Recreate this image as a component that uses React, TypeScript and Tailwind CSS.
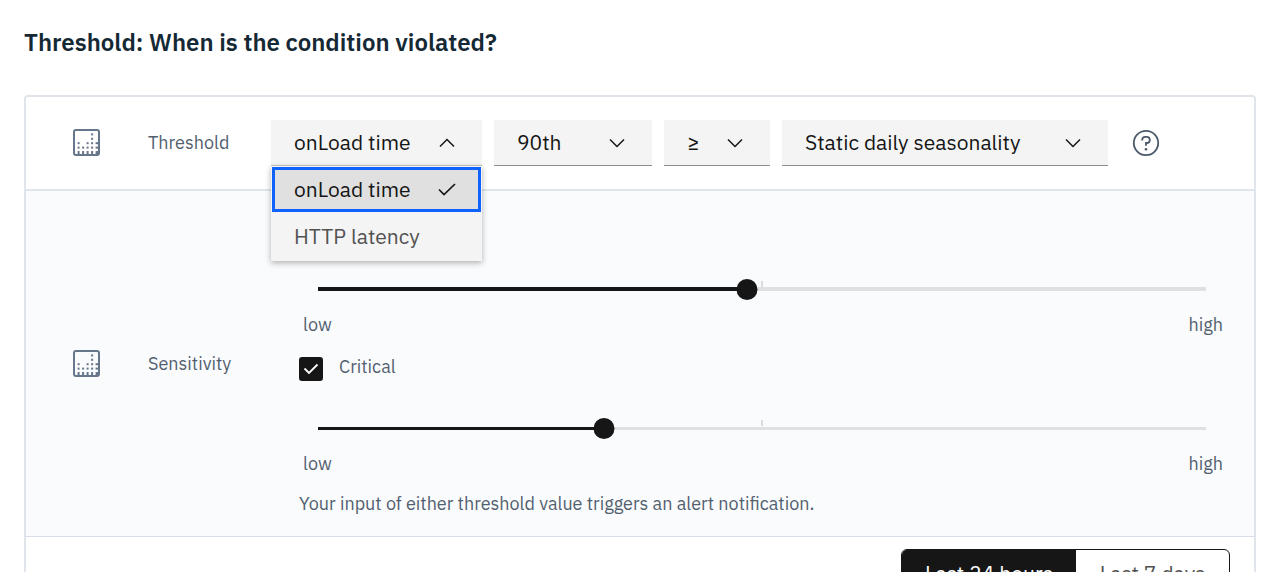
import { useState } from "react";

const dotColumns = [3, 2, 3, 5, 3];

function DistributionIcon() {
  return (
    <svg width="28" height="28" viewBox="0 0 28 28" fill="none" aria-hidden="true" className="shrink-0 text-[#66778b]">
      <rect x="1" y="1" width="25" height="25" rx="2" stroke="currentColor" strokeWidth="2" />
      <g fill="currentColor">
        {dotColumns.map((count, column) =>
          Array.from({ length: count }, (_, row) => (
            <rect
              key={`${column}-${row}`}
              x={4.6 + column * 4.5}
              y={22 - row * 4.4}
              width={column === 4 ? 3 : 2}
              height={row === 0 ? 3 : 2}
            />
          )),
        )}
      </g>
    </svg>
  );
}

function Chevron({ up = false }: { up?: boolean }) {
  return (
    <svg width="16" height="10" viewBox="0 0 16 10" fill="none" aria-hidden="true">
      <path d={up ? "M1 8.5 8 1.5l7 7" : "M1 1.5l7 7 7-7"} stroke="#161616" strokeWidth="1.5" />
    </svg>
  );
}

function Select({ label, options, className }: { label: string; options: string[]; className: string }) {
  return (
    <div className={`grid h-[46px] items-center border-b border-[#8d8d8d] bg-[#f4f4f4] ${className}`}>
      <select
        aria-label={label}
        className="col-start-1 row-start-1 h-full w-full appearance-none bg-transparent pr-12 pl-[23px] text-[21px] text-[#161616]"
      >
        {options.map((option) => (
          <option key={option}>{option}</option>
        ))}
      </select>
      <span className="pointer-events-none col-start-1 row-start-1 justify-self-end pr-[27px]">
        <Chevron />
      </span>
    </div>
  );
}

function MetricDropdown() {
  const [open, setOpen] = useState(true);
  const [value, setValue] = useState("onLoad time");
  return (
    <div className="relative w-[211px] text-[21px]">
      <button
        type="button"
        aria-haspopup="listbox"
        aria-expanded={open}
        onClick={() => setOpen(!open)}
        className="flex h-[46px] w-full items-center justify-between border-b border-[#c6c6c6] bg-[#f4f4f4] pr-[27px] pl-[23px] text-[#161616]"
      >
        {value}
        <Chevron up={open} />
      </button>
      {open && (
        <ul
          role="listbox"
          aria-label="Metric"
          className="absolute top-full left-0 z-10 w-full bg-[#f4f4f4] p-px shadow-[0_2px_6px_rgba(0,0,0,0.3)]"
        >
          {["onLoad time", "HTTP latency"].map((option) => (
            <li
              key={option}
              role="option"
              aria-selected={option === value}
              onClick={() => setValue(option)}
              className={
                option === value
                  ? "flex h-[45px] items-center justify-between border-3 border-[#0f62fe] bg-[#e0e0e0] pr-[22px] pl-[19px] text-[#161616]"
                  : "flex h-12 items-center px-[22px] text-[#525252]"
              }
            >
              {option}
              {option === value && (
                <svg width="18" height="13" viewBox="0 0 18 13" fill="none" aria-hidden="true">
                  <path d="M1 6.5 6 11.5 17 1" stroke="#161616" strokeWidth="1.7" />
                </svg>
              )}
            </li>
          ))}
        </ul>
      )}
    </div>
  );
}

function Slider({ label, initial, thick = false }: { label: string; initial: number; thick?: boolean }) {
  const [value, setValue] = useState(initial);
  const line = thick ? "h-[4px]" : "h-[3px]";
  return (
    <div>
      <div className="relative mr-12 ml-[19px] grid h-6 items-center">
        <div className={`col-start-1 row-start-1 bg-[#e0e0e0] ${line}`} />
        <div className={`col-start-1 row-start-1 bg-[#161616] ${line}`} style={{ width: `${value}%` }} />
        <span className="absolute top-1 left-1/2 h-1.5 w-0.5 -translate-x-1/2 bg-[#dcdcdc]" />
        <span
          className="absolute size-[21px] -translate-x-1/2 rounded-full bg-[#161616]"
          style={{ left: `${value}%` }}
        />
        <input
          type="range"
          aria-label={label}
          step="0.1"
          value={value}
          onChange={(event) => setValue(Number(event.target.value))}
          className="relative col-start-1 row-start-1 w-full cursor-pointer opacity-0"
        />
      </div>
      <div className="mt-3 flex justify-between pr-[31px] pl-1 leading-6">
        <span>low</span>
        <span>high</span>
      </div>
    </div>
  );
}

export default function App() {
  const [critical, setCritical] = useState(true);
  return (
    <main className="h-screen overflow-hidden bg-white px-6 pt-[26px] font-['IBM_Plex_Sans',Roboto,sans-serif] text-lg text-[#525f6f]">
      <h1 className="text-2xl leading-8 font-semibold text-[#152935]">Threshold: When is the condition violated?</h1>
      <section className="mt-[37px] rounded-t border-2 border-[#dfe5ea]">
        <div className="flex h-[94px] items-center border-b-2 border-[#dfe5ea] pl-[47px]">
          <DistributionIcon />
          <h2 className="ml-[47px] w-[123px]">Threshold</h2>
          <div className="flex items-center gap-3">
            <MetricDropdown />
            <Select label="Percentile" options={["90th"]} className="w-[158px]" />
            <Select label="Operator" options={["≥"]} className="w-[106px]" />
            <Select label="Threshold type" options={["Static daily seasonality"]} className="w-[326px]" />
            <button type="button" aria-label="Help" className="ml-3">
              <svg width="28" height="28" viewBox="0 0 28 28" fill="none" aria-hidden="true">
                <circle cx="14" cy="14" r="12.2" stroke="#4b596b" strokeWidth="1.8" />
                <path
                  d="M10.2 11.5v-.6c0-1.8 1.4-3.1 3.2-3.1h1.2c1.8 0 3.2 1.3 3.2 3.1s-1.4 3.1-3.2 3.1H14v2.8"
                  stroke="#4b596b"
                  strokeWidth="1.8"
                />
                <circle cx="14" cy="20.2" r="1.3" fill="#4b596b" />
              </svg>
            </button>
          </div>
        </div>
        <div className="flex items-center border-b border-[#d8deea] bg-[#fafbfd] pl-[47px]">
          <DistributionIcon />
          <h2 className="ml-[47px] w-[151px] shrink-0">Sensitivity</h2>
          <div className="min-w-0 flex-1 pt-[86px] pb-5">
            <Slider label="Warning sensitivity" initial={48.3} thick />
            <label className="mt-[14px] mb-[33px] flex h-8 items-center gap-4">
              <span className="mt-1 grid size-6 place-items-center">
                <input
                  type="checkbox"
                  checked={critical}
                  onChange={(event) => setCritical(event.target.checked)}
                  className="col-start-1 row-start-1 size-6 appearance-none rounded-[3px] border-2 border-[#161616] checked:bg-[#161616]"
                />
                {critical && (
                  <svg
                    width="16"
                    height="12"
                    viewBox="0 0 16 12"
                    fill="none"
                    aria-hidden="true"
                    className="pointer-events-none col-start-1 row-start-1"
                  >
                    <path d="M1.5 5.5 6 10 14.5 1.5" stroke="white" strokeWidth="1.8" />
                  </svg>
                )}
              </span>
              Critical
            </label>
            <Slider label="Critical sensitivity" initial={32.2} />
            <p className="mt-4 leading-6">Your input of either threshold value triggers an alert notification.</p>
          </div>
        </div>
        <div className="flex justify-end pt-3 pr-6 text-[21px]">
          <div className="flex h-12 overflow-hidden rounded-md border border-[#161616]">
            <button type="button" aria-pressed="true" className="w-[174px] bg-[#161616] text-white">
              Last 24 hours
            </button>
            <button type="button" aria-pressed="false" className="w-[153px] text-[#525252]">
              Last 7 days
            </button>
          </div>
        </div>
      </section>
    </main>
  );
}
